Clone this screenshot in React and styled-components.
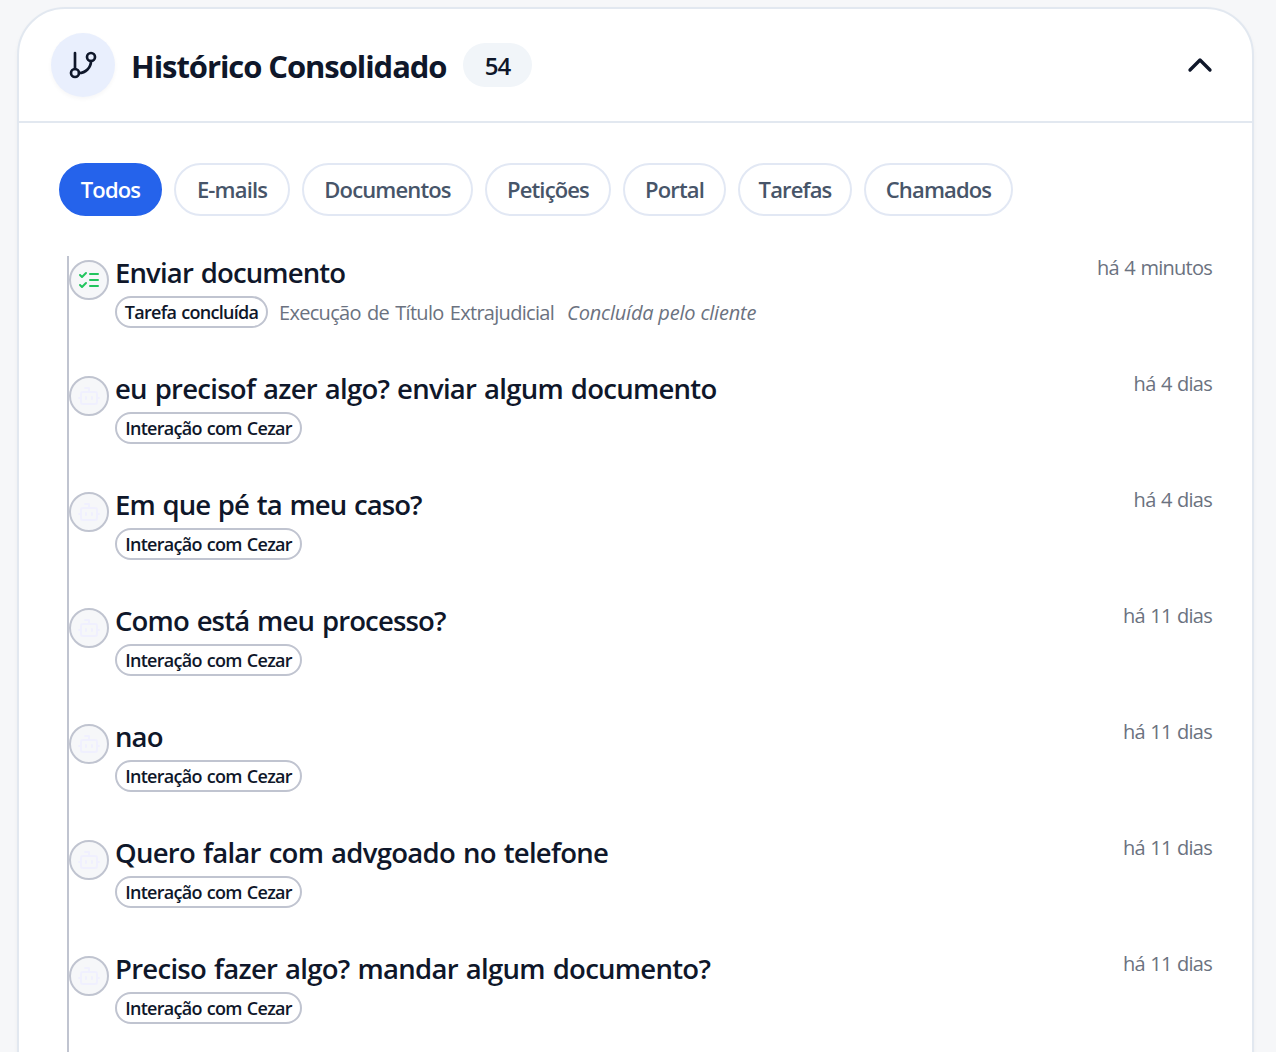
import React, { useState } from 'react'
import styled, { createGlobalStyle } from 'styled-components'

const GlobalStyle = createGlobalStyle`
  * {
    box-sizing: border-box;
  }

  body {
    margin: 0;
    height: 1052px;
    overflow: hidden;
    background-color: #f6f7f9;
    color: #0f172a;
    font-family: 'Open Sans', 'Noto Sans', sans-serif;
  }
`

const Page = styled.div`
  height: 1052px;
  padding: 7px 22px 0 17px;
  overflow: hidden;
`

const Card = styled.section`
  height: 1200px;
  background-color: white;
  border: 2px solid #e2e8f0;
  border-radius: 48px;
  box-shadow: 0 2px 4px rgba(15, 23, 42, 0.04);
`

const Header = styled.header`
  display: flex;
  align-items: center;
  height: 114px;
  padding: 0 32px;
  border-bottom: 2px solid #e2e8f0;
`

const HeaderIcon = styled.div`
  display: flex;
  align-items: center;
  justify-content: center;
  width: 64px;
  height: 64px;
  border-radius: 50%;
  background-color: #e9effd;
  box-shadow: 0 2px 4px rgba(15, 23, 42, 0.04);
`

const Title = styled.h2`
  width: 348px;
  margin: 0;
  padding: 2px 0 0 16px;
  font-size: 31px;
  line-height: 43px;
  font-weight: 700;
  letter-spacing: -1.07px;
  white-space: nowrap;
`

const Count = styled.span`
  width: 69px;
  height: 44px;
  border-radius: 22px;
  background-color: #f1f5f9;
  font-size: 24px;
  line-height: 46px;
  font-weight: 600;
  letter-spacing: -1px;
  text-align: center;
`

const ToggleButton = styled.button`
  display: flex;
  margin-left: auto;
  padding: 0;
  border: none;
  background: none;
  color: inherit;
  cursor: pointer;
`

const Filters = styled.div`
  display: flex;
  gap: 12px;
  padding: 40px 40px 0;
`

const FilterButton = styled.button`
  width: ${props => props.$width}px;
  height: 53px;
  padding: 0 0 2px;
  border: 2px solid ${props => props.$active ? '#2563eb' : '#e2e8f4'};
  border-radius: 27px;
  background-color: ${props => props.$active ? '#2563eb' : 'white'};
  color: ${props => props.$active ? 'white' : '#475569'};
  font-family: inherit;
  font-size: 22px;
  line-height: 30px;
  font-weight: 600;
  letter-spacing: -0.85px;
  white-space: nowrap;
  cursor: pointer;
`

const Timeline = styled.div`
  margin: 40px 40px 0 48px;
  padding-top: 4px;
  height: 900px;
  border-left: 2px solid #c0c4d0;
`

const Item = styled.article`
  display: flex;
  height: 116px;
`

const Marker = styled.div`
  display: flex;
  align-items: center;
  justify-content: center;
  width: 40px;
  height: 40px;
  margin-right: 6px;
  border: 2px solid #c0c4d0;
  border-radius: 50%;
  background-color: #f6f7f9;
  color: ${props => props.$done ? '#22c55e' : '#f0f0fe'};
`

const ItemBody = styled.div`
  flex: 1;
`

const ItemTitle = styled.div`
  height: 36px;
  font-size: 27.5px;
  line-height: 26px;
  font-weight: 600;
  letter-spacing: ${props => props.$tracking || -0.85}px;
  word-spacing: 1.5px;
  white-space: nowrap;
`

const Details = styled.div`
  display: flex;
  align-items: center;
  white-space: nowrap;
`

const Tag = styled.span`
  width: ${props => props.$width}px;
  height: 32px;
  border: 2px solid #c0c4d0;
  border-radius: 16px;
  font-size: 18px;
  line-height: 29px;
  font-weight: 600;
  letter-spacing: -0.7px;
  word-spacing: 1px;
  text-align: center;
`

const Muted = styled.span`
  margin-left: 11px;
  color: #6b7280;
  font-size: 20px;
  line-height: 30px;
  padding-top: 2px;
  letter-spacing: -0.7px;
  word-spacing: 1.7px;
`

const Note = styled(Muted)`
  margin-left: 13px;
  letter-spacing: -0.2px;
  word-spacing: 0;
`

const Time = styled.time`
  color: #6b7280;
  font-size: 20px;
  line-height: 16px;
  letter-spacing: -0.75px;
  word-spacing: 1px;
  white-space: nowrap;
`

const Icon = ({ size, children }) => (
  <svg width={size} height={size} viewBox="0 0 24 24" fill="none" stroke="currentColor" strokeWidth="2" strokeLinecap="round" strokeLinejoin="round">
    {children}
  </svg>
)

const BranchIcon = () => (
  <Icon size={32}>
    <path d="M6 3v12" />
    <circle cx="18" cy="6" r="3" />
    <circle cx="6" cy="18" r="3" />
    <path d="M18 9a9 9 0 0 1-9 9" />
  </Icon>
)

const ChecksIcon = () => (
  <Icon size={24}>
    <path d="m3 17 2 2 4-4" />
    <path d="m3 7 2 2 4-4" />
    <path d="M13 6h8M13 12h8M13 18h8" />
  </Icon>
)

const BotIcon = () => (
  <Icon size={24}>
    <path d="M12 8V4H8" />
    <rect width="16" height="12" x="4" y="8" rx="2" />
    <path d="M2 14h2M20 14h2M15 13v2M9 13v2" />
  </Icon>
)

const filters = [
  { label: 'Todos', width: 103 },
  { label: 'E-mails', width: 116 },
  { label: 'Documentos', width: 171 },
  { label: 'Petições', width: 126 },
  { label: 'Portal', width: 103 },
  { label: 'Tarefas', width: 114 },
  { label: 'Chamados', width: 149 }
]

const items = [
  { title: 'Enviar documento', time: 'há 4 minutos', done: true, process: 'Execução de Título Extrajudicial', note: 'Concluída pelo cliente' },
  { title: 'eu precisof azer algo? enviar algum documento', time: 'há 4 dias', tracking: -0.74 },
  { title: 'Em que pé ta meu caso?', time: 'há 4 dias', tracking: -0.92 },
  { title: 'Como está meu processo?', time: 'há 11 dias' },
  { title: 'nao', time: 'há 11 dias' },
  { title: 'Quero falar com advgoado no telefone', time: 'há 11 dias', tracking: -0.72 },
  { title: 'Preciso fazer algo? mandar algum documento?', time: 'há 11 dias', tracking: -0.72 }
]

const App = () => {

  const [active, setActive] = useState('Todos')
  const [open, setOpen] = useState(true)

  return (
    <Page>
      <GlobalStyle />
      <Card>
        <Header>
          <HeaderIcon><BranchIcon /></HeaderIcon>
          <Title>Histórico Consolidado</Title>
          <Count>54</Count>
          <ToggleButton onClick={() => setOpen(!open)}>
            <Icon size={40}><path d={open ? 'm18 15-6-6-6 6' : 'm6 9 6 6 6-6'} /></Icon>
          </ToggleButton>
        </Header>
        {open && (
          <>
            <Filters>
              {filters.map(({ label, width }) => (
                <FilterButton key={label} $width={width} $active={active === label} onClick={() => setActive(label)}>{label}</FilterButton>
              ))}
            </Filters>
            <Timeline>
              {items.map(item => (
                <Item key={item.title}>
                  <Marker $done={item.done}>{item.done ? <ChecksIcon /> : <BotIcon />}</Marker>
                  <ItemBody>
                    <ItemTitle $tracking={item.tracking}>{item.title}</ItemTitle>
                    <Details>
                      <Tag $width={item.done ? 153 : 187}>{item.done ? 'Tarefa concluída' : 'Interação com Cezar'}</Tag>
                      {item.process && <Muted>{item.process}</Muted>}
                      {item.note && <Note as="em">{item.note}</Note>}
                    </Details>
                  </ItemBody>
                  <Time>{item.time}</Time>
                </Item>
              ))}
            </Timeline>
          </>
        )}
      </Card>
    </Page>
  )
}

export default App
